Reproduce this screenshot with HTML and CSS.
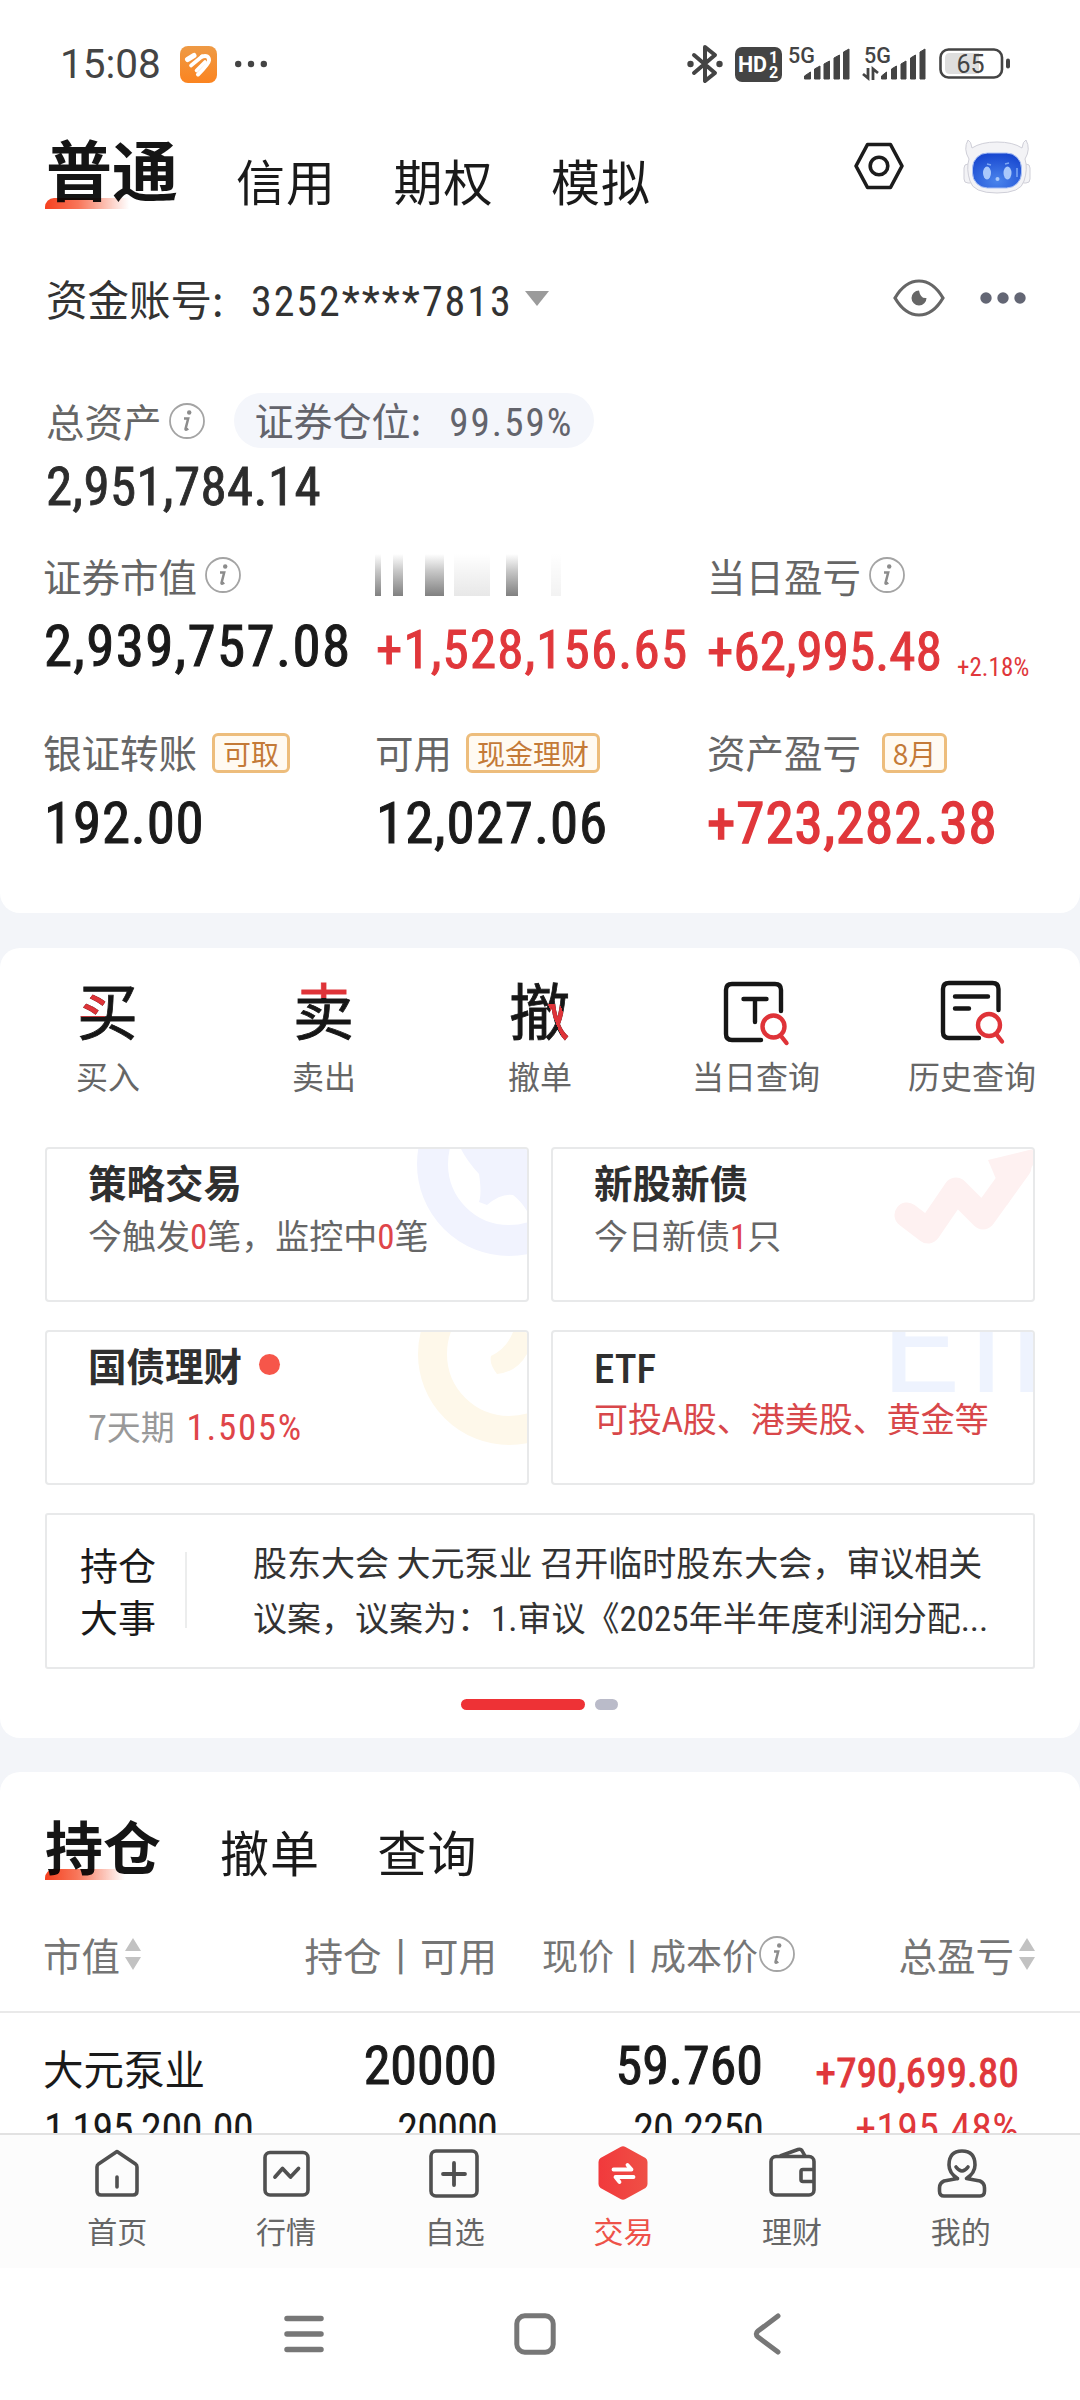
FILE: index.html
```html
<!DOCTYPE html>
<html lang="zh-CN">
<head>
<meta charset="utf-8">
<title>交易</title>
<link rel="stylesheet" href="styles.css">
</head>
<body>
<svg width="0" height="0" class="defs">
  <defs>
    <symbol id="info" viewBox="0 0 38 38"><circle cx="19" cy="19" r="17" fill="none" stroke="#a4a4a4" stroke-width="1.8"/><circle cx="21.200" cy="10.500" r="2.200" fill="#8c8c8c"/><path d="M16 16.500h4.200l-2.700 10.500q-.3 1.600 2.800-.3" fill="none" stroke="#8c8c8c" stroke-width="2.500"/></symbol>
    <symbol id="sort" viewBox="0 0 18 32"><path d="M9 0l8 13H1zM9 32l8-13H1z" fill="#c2c2c2"/></symbol>
  </defs>
</svg>
<div class="phone">
  <section class="card top-card">
    <div class="status">
      <span class="clock">15:08</span>
      <svg class="app-badge" width="37" height="37" viewBox="0 0 37 37"><defs><linearGradient id="og" x1="0" y1="0" x2="0" y2="1"><stop offset="0" stop-color="#ee9a45"/><stop offset="1" stop-color="#fb8420"/></linearGradient></defs><rect width="37" height="37" rx="8" fill="url(#og)"/><g fill="none" stroke="#fff" stroke-linecap="round" stroke-linejoin="round"><path d="M7.500 13.500L14 9.500" stroke-width="5"/><path d="M11 19.500L22 10.500M16.500 24.500L25 16" stroke-width="3.600"/><path d="M22 10.500q7-2 7 4 0 3-11 14" stroke-width="4"/></g></svg>
      <svg width="32" height="8" viewBox="0 0 32 8"><g fill="#444"><circle cx="3.200" cy="4" r="3.200"/><circle cx="16" cy="4" r="3.200"/><circle cx="28.800" cy="4" r="3.200"/></g></svg>
      <div class="status-right">
        <svg width="36" height="40" viewBox="0 0 36 40"><path d="M7 11l21 18-10 8V3l10 8L7 29" fill="none" stroke="#444" stroke-width="4" stroke-linejoin="round" stroke-linecap="round"/><circle cx="3.500" cy="20" r="3.200" fill="#444"/><circle cx="32.500" cy="20" r="3.200" fill="#444"/></svg>
        <svg class="hd" width="47" height="35" viewBox="0 0 47 35"><rect width="47" height="35" rx="7" fill="#444"/><g fill="#fff" font-family="Roboto, sans-serif" font-weight="700"><text x="3" y="25" font-size="21.500" textLength="29">HD</text><text x="34" y="15.500" font-size="16">1</text><text x="34" y="31" font-size="16">2</text></g></svg>
        <svg class="sig" width="63" height="36" viewBox="0 0 63 36"><text x="0" y="16.500" font-size="21.500" font-weight="500" fill="#444" font-family="Roboto, sans-serif">5G</text><path d="M16.500 33v-3l6-4v7zM26.500 33V23l5.500-3v13zM36 33V18l5.500-3v18zM46 33V12l5.500-3v24zM55.500 33V6l5.500-3v30z" fill="#444" stroke="#444" stroke-linejoin="round"/></svg>
        <svg class="sig2" width="64" height="36" viewBox="0 0 64 36"><text x="2" y="16.500" font-size="21.500" font-weight="500" fill="#444" font-family="Roboto, sans-serif">5G</text><path d="M6 22v10L1 28M11 34V23l5 4" fill="none" stroke="#444" stroke-width="2.800"/><path d="M19.500 33v-3l5-4v7zM29.500 33V23l5-3v13zM39 33V18l5-3v18zM48.500 33V12l5-3v24zM58 33V6l5-3v30z" fill="#444" stroke="#444" stroke-linejoin="round"/></svg>
        <svg class="bat" width="72" height="32" viewBox="0 0 72 32"><rect x="1.500" y="1.500" width="61.500" height="28" rx="8" fill="#fff" stroke="#444" stroke-width="2.600"/><path d="M11 5h29v21H11q-5 0-5-5V10q0-5 5-5z" fill="#dedede"/><rect x="67" y="10.500" width="4" height="10" rx="2" fill="#444"/><text x="17.500" y="24.500" font-size="25" fill="#444" font-family="Roboto, sans-serif" textLength="28">65</text></svg>
      </div>
    </div>
    <header class="header">
      <nav class="tabs">
        <span class="tab-on">普通</span><span class="tab t1">信用</span><span class="tab">期权</span><span class="tab">模拟</span>
      </nav>
      <svg class="hex" width="50" height="48" viewBox="0 0 50 48"><path d="M13.500 2.500h23L48 24 36.500 45.500h-23L2 24z" fill="none" stroke="#1c1c1c" stroke-width="3.600" stroke-linejoin="round"/><circle cx="25" cy="24" r="8.800" fill="none" stroke="#1c1c1c" stroke-width="3.600"/></svg>
      <svg class="robot" width="68" height="56" viewBox="0 0 68 56"><defs><radialGradient id="rb" cx=".5" cy=".8" r=".8"><stop offset="0" stop-color="#4a84ec"/><stop offset="1" stop-color="#1746cf"/></radialGradient></defs><g fill="#f3f3f6" stroke="#cfcfd8" stroke-width="1"><rect x="1" y="25" width="10" height="19" rx="4"/><rect x="57" y="25" width="10" height="19" rx="4"/><path d="M5 1q-5 9 1 19Q3 30 7 42q3 12 27 12t27-12q4-12 1-22 6-10 1-19-3 1-4 8Q50 3 34 3T9 9Q8 2 5 1z"/></g><rect x="9.500" y="14" width="49" height="35" rx="15" fill="url(#rb)" stroke="#a9c0f5"/><ellipse cx="24" cy="34" rx="4" ry="6.500" fill="#a9c8fb"/><ellipse cx="44.500" cy="34" rx="4" ry="6.500" fill="#a9c8fb"/><circle cx="34.500" cy="40" r="2" fill="#a9c8fb"/><path d="M24 25l4 1M42 25l4-1M54 29v9" stroke="#7ea8f5" stroke-width="1.500"/></svg>
    </header>
    <div class="account">
      <span class="acc-label">资金账号:</span><span class="num acc-no">3252****7813</span>
      <svg width="24" height="15" viewBox="0 0 24 15"><path d="M0 0h24L12 15z" fill="#9b9b9b"/></svg>
      <svg class="eye" width="52" height="38" viewBox="0 0 52 38"><path d="M2 19Q12 2 26 2t24 17Q40 36 26 36T2 19z" fill="none" stroke="#666" stroke-width="3.200"/><path d="M26 11.500a7.500 7.500 0 1 0 7.500 7.500q-6 1-7.500-7.500z" fill="#666"/></svg>
      <svg width="46" height="12" viewBox="0 0 46 12"><g fill="#636674"><circle cx="6" cy="6" r="5.700"/><circle cx="23" cy="6" r="5.700"/><circle cx="40" cy="6" r="5.700"/></g></svg>
    </div>
    <div class="total">
      <span class="lbl">总资产</span><svg class="info" width="38" height="38"><use href="#info"/></svg>
      <span class="pill"><span>证券仓位:</span><span class="num pct">99.59%</span></span>
    </div>
    <div class="num total-num">2,951,784.14</div>
    <div class="metrics">
      <div class="lbl">证券市值<svg class="info" width="38" height="38"><use href="#info"/></svg></div>
      <div class="lbl"><span class="mosaic"></span></div>
      <div class="lbl">当日盈亏<svg class="info" width="38" height="38"><use href="#info"/></svg></div>
      <div class="val num v1">2,939,757.08</div>
      <div class="val num red v2">+1,528,156.65</div>
      <div class="val num red v3">+62,995.48<span class="chg">+2.18%</span></div>
      <div class="lbl r2">银证转账<span class="badge b1">可取</span></div>
      <div class="lbl r2">可用<span class="badge b2">现金理财</span></div>
      <div class="lbl r2">资产盈亏<span class="badge b3">8月</span></div>
      <div class="val num v4">192.00</div>
      <div class="val num v5">12,027.06</div>
      <div class="val num red v6">+723,282.38</div>
    </div>
  </section>

  <section class="card tools">
    <div class="actions">
      <div class="action"><span class="glyph buy">买</span><span>买入</span></div>
      <div class="action"><span class="glyph sell">卖</span><span>卖出</span></div>
      <div class="action"><span class="glyph cancel">撤</span><span>撤单</span></div>
      <div class="action"><svg width="66" height="66" viewBox="0 0 66 66"><g fill="none" stroke="#161616" stroke-width="4.400" stroke-linecap="round"><path d="M58 31V10q0-6-6-6H9Q3 4 3 10v44q0 6 6 6h29M20.500 19h23M32 19v23"/></g><g fill="none" stroke="#df3338" stroke-width="4.400" stroke-linecap="round"><circle cx="50.500" cy="46.500" r="11"/><path d="M58 56l5.500 7"/></g></svg><span>当日查询</span></div>
      <div class="action"><svg width="66" height="66" viewBox="0 0 66 66"><g fill="none" stroke="#161616" stroke-width="4.400" stroke-linecap="round"><path d="M59.500 30V9q0-6-6-6H10Q4 3 4 9v43q0 6 6 6h30M16 16.500h33M16 28.500h14"/></g><g fill="none" stroke="#df3338" stroke-width="4.400" stroke-linecap="round"><circle cx="50" cy="45" r="11"/><path d="M57.500 54.500l5.500 7"/></g></svg><span>历史查询</span></div>
    </div>
    <div class="promos">
      <div class="promo">
        <svg class="mark" width="120" height="120" viewBox="0 0 120 120"><circle cx="102" cy="15" r="76.500" fill="none" stroke="#f1f3fe" stroke-width="31"/><path d="M54 0q6 12 18 25 3 20 0 28l8 3q14-12 26-10 8 6 14 16V0z" fill="#f1f3fe"/></svg>
        <h3>策略交易</h3><p>今触发<em class="num">0</em>笔，监控中<em class="num">0</em>笔</p>
      </div>
      <div class="promo">
        <svg class="mark" width="150" height="120" viewBox="0 0 150 120"><path d="M24 66l21 16 28-41 27 27 36-50" fill="none" stroke="#fef1f1" stroke-width="25" stroke-linecap="round" stroke-linejoin="round"/><path d="M105 11l45-11v16l-26 40z" fill="#fef1f1"/></svg>
        <h3>新股新债</h3><p>今日新债<em class="num">1</em>只</p>
      </div>
      <div class="promo">
        <svg class="mark" width="120" height="120" viewBox="0 0 120 120"><circle cx="102" cy="22" r="76.500" fill="none" stroke="#fef8ea" stroke-width="29"/><path d="M120 0h-14q-6 16-22 24-2 8 6 18 20-2 30-20z" fill="#fef8ea"/></svg>
        <h3>国债理财<i class="dot"></i></h3><p class="rate"><span>7天期</span> <em class="num">1.505%</em></p>
      </div>
      <div class="promo">
        <svg class="mark" width="150" height="62" viewBox="0 0 150 62"><text x="-2 62 126" y="60" font-size="138" font-family="Roboto, sans-serif" fill="#eef3fe">ETF</text></svg>
        <h3 class="num">ETF</h3><p class="etf">可投A股、港美股、黄金等</p>
      </div>
    </div>
    <div class="event">
      <div class="event-title">持仓<br>大事</div>
      <div class="event-text">股东大会 大元泵业 召开临时股东大会，审议相关<br>议案，议案为：<span class="num">1.</span>审议《<span class="num">2025</span>年半年度利润分配<span class="num">...</span></div>
    </div>
    <div class="pager"><i class="on"></i><i></i></div>
  </section>

  <section class="card holdings">
    <nav class="tabs small">
      <span class="tab-on">持仓</span><span class="tab t1">撤单</span><span class="tab">查询</span>
    </nav>
    <div class="row head">
      <div class="c1">市值<svg class="sort" width="18" height="32"><use href="#sort"/></svg></div>
      <div class="c2">持仓丨可用</div>
      <div class="c3">现价丨成本价<svg class="info" width="38" height="38"><use href="#info"/></svg></div>
      <div class="c4">总盈亏<svg class="sort" width="18" height="32"><use href="#sort"/></svg></div>
    </div>
    <div class="row main">
      <div class="c1">大元泵业</div><div class="c2 num">20000</div><div class="c3 num">59.760</div><div class="c4 num red">+790,699.80</div>
    </div>
    <div class="row sub num">
      <div class="c1">1,195,200.00</div><div class="c2">20000</div><div class="c3">20.2250</div><div class="c4 red">+195.48%</div>
    </div>
  </section>

  <nav class="tabbar">
    <div class="item"><svg width="54" height="54" viewBox="0 0 54 54"><path d="M27 5.500L45.500 18Q47 19 47 21v24q0 4-4 4H11q-4 0-4-4V21q0-2 1.500-3zM27 31v10" fill="none" stroke="#505050" stroke-width="3.600" stroke-linejoin="round" stroke-linecap="round"/></svg><span>首页</span></div>
    <div class="item"><svg width="54" height="54" viewBox="0 0 54 54"><rect x="6" y="6.500" width="43" height="42.500" rx="5" fill="none" stroke="#505050" stroke-width="3.600"/><path d="M16 31l7.500-8.500 8 8.500 8-8.500" fill="none" stroke="#505050" stroke-width="3.800" stroke-linecap="round" stroke-linejoin="round"/></svg><span>行情</span></div>
    <div class="item"><svg width="54" height="54" viewBox="0 0 54 54"><rect x="3" y="5" width="46" height="45" rx="5" fill="none" stroke="#505050" stroke-width="3.600"/><path d="M26 17v22M15 28h22" stroke="#505050" stroke-width="3.800" stroke-linecap="round"/></svg><span>自选</span></div>
    <div class="item active"><svg width="54" height="54" viewBox="0 0 54 54"><defs><linearGradient id="rg"><stop offset="0" stop-color="#f1393c"/><stop offset="1" stop-color="#ef5046"/></linearGradient></defs><path d="M24.500 1q2.500-1.500 5 0l20 11q2 1.500 2 4v22q0 2.500-2 4l-20 11q-2.500 1.500-5 0l-20-11q-2-1.500-2-4V16q0-2.500 2-4z" fill="url(#rg)"/><path d="M17.500 23.500h18l-4-4.500M37.500 31h-18l4 5" fill="none" stroke="#fff" stroke-width="3.800" stroke-linecap="round" stroke-linejoin="round"/></svg><span>交易</span></div>
    <div class="item"><svg width="54" height="54" viewBox="0 0 54 54"><g fill="none" stroke="#505050" stroke-width="3.600" stroke-linejoin="round"><rect x="6" y="10.500" width="43" height="38.500" rx="5"/><path d="M15 10l18-6.500q3-1 4.500 2L40 10M49 23.500H38q-2 0-2 2v8q0 2 2 2h11"/></g></svg><span>理财</span></div>
    <div class="item"><svg width="54" height="54" viewBox="0 0 54 54"><g fill="none" stroke="#505050" stroke-width="3.600" stroke-linecap="round" stroke-linejoin="round"><path d="M23.500 32.500Q15 27 15 19 15 5 28 5t13 14q0 8-8.500 13.500L46 35q4.500 2 4.500 7v3q0 5-4.500 5H10q-4.500 0-4.500-5v-3q0-5 4.500-7l13.500-2.500"/><path d="M22 21q6 8 12 0"/></g></svg><span>我的</span></div>
  </nav>
  <div class="sysnav">
    <svg width="40" height="40" viewBox="0 0 40 40"><path d="M3 4.500h34M3 20h34M3 35.500h34" stroke="#777" stroke-width="5.500" stroke-linecap="round"/></svg>
    <svg class="sq" width="42" height="42" viewBox="0 0 42 42"><rect x="2.800" y="2.800" width="36.400" height="36.400" rx="8" fill="none" stroke="#777" stroke-width="5"/></svg>
    <svg class="back" width="28" height="42" viewBox="0 0 28 42"><path d="M25 3L5 18q-3.500 3 0 6l20 15" fill="none" stroke="#777" stroke-width="5" stroke-linecap="round"/></svg>
  </div>
</div>
</body>
</html>
```
FILE: styles.css
```css
* { box-sizing: border-box; }
body { margin: 0; background: #f3f5f9; font-family: "Noto Sans CJK SC", sans-serif; color: #1a1a1a; }
svg { display: block; flex: none; overflow: visible; }
.defs { position: absolute; }
em, i { font-style: normal; }
.phone { width: 1080px; height: 2400px; overflow: hidden; display: flex; flex-direction: column; }
.card { background: #fff; border-radius: 20px; flex: none; }
.num { font-family: Roboto, sans-serif; font-stretch: 82%; white-space: nowrap; }
.red { color: #e0373b; }
.info { margin-left: 7px; }

.top-card { height: 913px; border-radius: 0 0 20px 20px; }
.status { height: 128px; display: flex; align-items: center; padding: 0 69px 0 60px; }
.clock { font: 400 40.5px/48px Roboto, sans-serif; color: #444; width: 120px; }
.app-badge { margin-right: 18px; }
.status-right { margin-left: auto; display: flex; align-items: center; }
.hd { margin-left: 12px; }
.sig { margin-left: 6px; }
.sig2 { margin-left: 11px; }
.bat { margin-left: 13px; }

.header { height: 100px; display: flex; padding: 0 49px 0 46px; }
.tabs { display: flex; align-items: flex-start; white-space: nowrap; }
.tab-on { position: relative; font-weight: 700; font-size: 66px; line-height: 66px; margin-top: 6px; z-index: 0; color: #151515; }
.tab-on::after { content: ""; position: absolute; left: -1px; top: 64px; width: 84px; height: 11px; border-radius: 9px 0 0 0; background: linear-gradient(90deg, #f5401f, #f8765a 40%, rgba(255,220,210,0)); z-index: 1; mix-blend-mode: multiply; }
.tab { font-size: 49px; letter-spacing: 1px; line-height: 50px; margin: 27px 0 0 57.500px; color: #1a1a1a; }
.tab.t1 { margin-left: 58px; }
.hex { margin: 14px 0 0 auto; }
.robot { margin: 11px 0 0 59px; }

.account { height: 60px; margin-top: 40px; padding: 0 54px 0 46px; display: flex; align-items: center; color: #333; }
.acc-label { font-size: 41.500px; width: 205px; white-space: nowrap; }
.acc-no { font-size: 42px; width: 274px; letter-spacing: 1.950px; padding-top: 7px; }
.eye { margin: 0 35px 0 auto; }

.total { height: 55px; margin-top: 65px; padding-left: 46px; display: flex; align-items: center; }
.lbl { font-size: 38.500px; line-height: 50px; color: #666; }
.total .lbl { margin-top: -2px; }
.total .info { margin-left: 6px; }
.pill { margin-left: 28px; width: 360px; height: 55px; border-radius: 28px; background: #f4f6fb; color: #63646c; font-size: 39px; line-height: 52px; padding-left: 21px; display: flex; }
.pct { margin-left: 28px; line-height: 61px; letter-spacing: 2px; }
.total-num { font-size: 53px; line-height: 59px; letter-spacing: .4px; margin: 10px 0 33px 46px; color: #2c2c2c; -webkit-text-stroke: .8px; }

.metrics { display: grid; grid-template-columns: 332px 332px 372px; grid-template-rows: 50px 76px 101px 76px; padding-left: 44px; }
.metrics .lbl { display: flex; align-items: center; margin-top: -1px; margin-left: -1px; }
.metrics .r2 { margin-top: 50px; height: 50px; }
.val { font-size: 57px; line-height: 60px; padding-top: 17px; letter-spacing: 1.400px; -webkit-text-stroke: 1px; }
.v2, .v3 { font-size: 53px; }
.v2 { padding-top: 20px; letter-spacing: 1.200px; }
.v3 { padding-top: 22px; letter-spacing: .1px; margin-left: -1px; }
.v4 { letter-spacing: .8px; }
.v5 { letter-spacing: 1px; }
.v6 { letter-spacing: 1px; -webkit-text-stroke: 1.500px; margin-left: -1px; }
.chg { font-size: 25px; margin-left: 15px; position: relative; top: 6px; -webkit-text-stroke: 0; }
.mosaic { width: 202px; height: 42px; background:
  linear-gradient(90deg, transparent 3%, #fff 3% 9%, transparent 9% 14%, #fff 14% 25%, transparent 25% 34%, #fff 34% 39%, transparent 39% 57%, #fff 57% 65%, transparent 65% 71%, #fff 71% 87%, transparent 87% 92%, #fff 92%),
  linear-gradient(90deg, transparent 37%, rgba(255,255,255,.82) 37% 60%, transparent 60% 80%, rgba(255,255,255,.9) 80%),
  linear-gradient(180deg, #fff, #c8c8c8 40%, #808080); }
.badge { height: 40px; line-height: 34px; font-size: 28px; border: 3px solid #edbd7c; border-radius: 6px; background: #fffaf2; color: #c47a38; text-align: center; margin-top: 3px; }
.b1 { width: 78px; margin-left: 15px; }
.b2 { width: 134px; margin-left: 14px; }
.b3 { width: 65px; margin-left: 21px; }

.tools { margin-top: 35px; height: 790px; }
.actions { display: grid; grid-template-columns: repeat(5, 216px); height: 199px; padding-top: 32px; }
.action { display: flex; flex-direction: column; align-items: center; font-size: 32px; line-height: 46px; color: #666; }
.action svg, .glyph { height: 66px; margin-bottom: 6px; }
.glyph { width: 62px; font-size: 61px; line-height: 57px; color: transparent; background-clip: text; -webkit-background-clip: text; background-repeat: no-repeat; -webkit-text-stroke: .8px transparent; }
.buy { background-image: linear-gradient(#df3338, #df3338), linear-gradient(#161616, #161616); background-size: 28px 24px, 100% 100%; background-position: 0 13px, 0 0; }
.sell { background-image: linear-gradient(#df3338 0 18px, #161616 18px); }
.cancel { background-image: linear-gradient(67deg, transparent 0 52px, #df3338 52px 63px, transparent 63px), linear-gradient(#161616, #161616); background-size: 100% 42px, 100% 100%; background-position: 0 24px, 0 0; }
.promos { display: grid; grid-template-columns: 484px 484px; grid-template-rows: 155px 155px; gap: 28px 22px; padding-left: 45px; }
.promo { position: relative; overflow: hidden; border: 2px solid #e8e9ea; border-radius: 4px; padding: 8px 0 0 41px; }
.mark { position: absolute; right: 0; top: 0; overflow: hidden; }
.promo h3 { position: relative; margin: 0; font-size: 38.500px; line-height: 48px; font-weight: 700; color: #2f2f2f; display: flex; align-items: center; }
.promo h3.num { font-size: 41px; font-weight: 500; height: 48px; line-height: 48px; padding-top: 9px; font-stretch: 82%; }
.promo p { position: relative; margin: 7px 0 0; font-size: 34px; line-height: 46px; color: #666; white-space: nowrap; }
.promo em { color: #df4549; }
.promo em.num { font-size: 35px; }
.promo .dot { width: 21px; height: 21px; border-radius: 50%; background: #f6564a; margin-left: 17px; }
.promo .rate { margin-top: 15px; color: #999; }
.promo .rate em.num { font-size: 37px; letter-spacing: 1.700px; margin-left: 4px; }
.promo .etf { color: #d8474a; }
.event { margin: 28px 0 0 45px; width: 990px; height: 156px; border: 2px solid #e8e9ea; border-radius: 3px; display: flex; align-items: center; padding-left: 33px; }
.event-title { font-size: 38px; line-height: 52px; width: 107px; border-right: 2px solid #eceded; color: #1a1a1a; margin-top: -2px; height: 76px; display: flex; align-items: center; }
.event-text { font-size: 34px; line-height: 55px; margin: -1px 0 0 66px; white-space: nowrap; color: #333; }
.event-text .num { font-size: 35px; }
.pager { display: flex; justify-content: center; gap: 10px; margin: 30px 2px 0 0; }
.pager i { width: 23px; height: 11px; border-radius: 6px; background: #babbc9; }
.pager .on { width: 124px; background: #ee3236; }

.holdings { margin-top: 34px; height: 361px; border-radius: 20px 20px 0 0; overflow: hidden; }
.small { padding: 41px 0 0 45px; height: 150px; }
.small .tab-on { font-size: 58px; line-height: 58px; margin-top: 3px; }
.small .tab-on::after { left: 0; top: 53px; width: 80px; }
.small .tab { margin-top: 13px; }
.small .t1 { margin-left: 59px; }
.row { display: grid; grid-template-columns: 240px 213px 300px 239px; margin-left: 44px; }
.row > div { white-space: nowrap; }
.head { font-size: 38.500px; line-height: 50px; color: #757575; height: 89px; padding-top: 7px; align-items: start; }
.head > div { display: flex; align-items: center; }
.head .c1 { margin-left: -1px; }
.head .c2, .head .c4 { justify-content: flex-end; }
.head .c3 { font-size: 36px; padding-left: 45px; }
.head .info { margin-left: 0; }
.head .sort { margin-left: 4px; }
.main { position: relative; height: 100px; padding-top: 27px; line-height: 60px; }
.main::before { content: ""; position: absolute; left: -44px; top: 0; width: 1080px; height: 2px; background: #e9e9e9; }
.main .c1 { font-size: 40.500px; margin-left: -1px; }
.main .num { text-align: right; font-size: 54px; line-height: 56px; letter-spacing: 0; -webkit-text-stroke: 1px; }
.main .c4, .sub .c4 { padding-right: 17px; }
.main .num.c4 { font-size: 41px; line-height: 70px; letter-spacing: .2px; }
.main .c3, .sub .c3 { padding-right: 34px; }
.sub { font-size: 42px; line-height: 50px; margin-top: -7px; text-align: right; letter-spacing: -.4px; }
.sub .c2, .sub .c3 { letter-spacing: -.8px; }
.sub .c4 { letter-spacing: .2px; }
.sub .c1 { text-align: left; }

.tabbar { flex: none; height: 135px; border-top: 2px solid #e2e2e2; background: #fcfcfc; padding: 11px 35px 0 33px; display: grid; grid-template-columns: repeat(6, 168.700px); }
.item { display: flex; flex-direction: column; align-items: center; font-size: 30px; line-height: 40px; color: #666; }
.item span { margin-top: 10px; }
.active { color: #ee5249; }
.sysnav { flex: 1; background: #fff; display: flex; align-items: center; padding: 0 0 1px 284px; }
.sq { margin-left: 190px; }
.back { margin-left: 197px; }
```
